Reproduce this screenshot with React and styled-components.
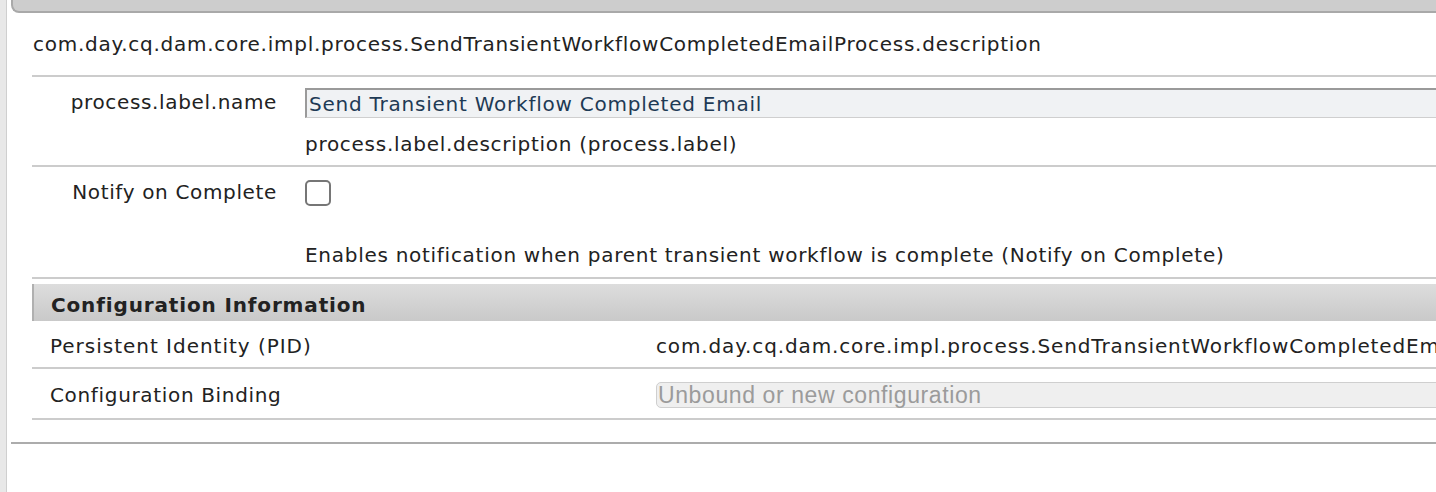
import React from 'react'
import styled, { createGlobalStyle } from 'styled-components'

const GlobalStyle = createGlobalStyle`
  html, body {
    margin: 0;
    padding: 0;
    background: #fff;
  }
  body {
    font-family: "DejaVu Sans", Verdana, sans-serif;
    color: #222;
    overflow: hidden;
  }
`

const Page = styled.div`
  display: flex;
  width: 1436px;
  height: 492px;
  overflow: hidden;
`

const Rail = styled.div`
  flex: 0 0 6px;
  background: #e8e8e8;
  border-right: 1px solid #cfcfcf;
`

const Dialog = styled.div`
  flex: 0 0 1500px;
  margin-left: 4px;
  border-bottom: 2px solid #acacac;
  align-self: flex-start;
  padding-bottom: 22px;
`

const TitleBar = styled.div`
  height: 11px;
  background: #cdcdcd;
  border-left: 2px solid #a9a9a9;
  border-bottom: 2px solid #a9a9a9;
  border-bottom-left-radius: 8px;
`

const Body = styled.div`
  padding-left: 21px;
`

const Description = styled.div`
  font-size: 20px;
  letter-spacing: 0.74px;
  padding: 19px 0 0 1px;
  height: 43px;
  border-bottom: 2px solid #cccccc;
  white-space: nowrap;
`

const PropRow = styled.div`
  display: grid;
  grid-template-columns: 273px 1fr;
  border-bottom: 2px solid #cccccc;
  height: ${p => p.$h}px;
  box-sizing: border-box;
`

const Label = styled.div`
  font-size: 20px;
  letter-spacing: 0.65px;
  text-align: right;
  padding: ${p => p.$top}px 28px 0 0;
`

const Value = styled.div`
  display: flex;
  flex-direction: column;
  align-items: flex-start;
  padding-top: ${p => p.$top}px;
`

const TextInput = styled.div`
  box-sizing: border-box;
  width: 1200px;
  height: 30px;
  background: #f0f2f4;
  border-top: 2px solid #9a9a9a;
  border-left: 2px solid #9a9a9a;
  border-bottom: 1px solid #cfcfcf;
  color: #1e3a55;
  font-size: 20px;
  letter-spacing: 0.76px;
  line-height: 28px;
  padding-left: 2px;
`

const Help = styled.div`
  font-size: 20px;
  letter-spacing: 0.72px;
  margin-top: ${p => p.$gap}px;
  white-space: nowrap;
`

const Checkbox = styled.span`
  display: block;
  width: 26px;
  height: 26px;
  box-sizing: border-box;
  border: 2px solid #767676;
  border-radius: 5px;
  background: #fff;
`

const SectionHead = styled.div`
  margin-top: 5px;
  height: 37px;
  box-sizing: border-box;
  background: linear-gradient(#dddddd, #c9c9c9);
  border-left: 2px solid #b0b0b0;
  font-size: 20px;
  font-weight: bold;
  letter-spacing: 0.85px;
  padding: 9px 0 0 17px;
`

const InfoRow = styled.div`
  display: grid;
  grid-template-columns: 624px 1fr;
  align-items: center;
  height: ${p => p.$h}px;
  box-sizing: border-box;
  padding-top: ${p => p.$top}px;
  border-bottom: 2px solid #cccccc;
  font-size: 20px;
`

const InfoLabel = styled.div`
  padding-left: 18px;
  letter-spacing: ${p => p.$ls}px;
  white-space: nowrap;
`

const InfoValue = styled.div`
  letter-spacing: 0.87px;
  white-space: nowrap;
`

const Select = styled.div`
  box-sizing: border-box;
  width: 900px;
  height: 26px;
  background: #efefef;
  border: 1px solid #cfcfcf;
  border-radius: 5px;
  color: #9b9b9b;
  font-family: "Liberation Sans", Arial, sans-serif;
  font-size: 23px;
  line-height: 24px;
  letter-spacing: 0.6px;
  padding-left: 1px;
  white-space: nowrap;
`

export default function App() {
  return (
    <Page>
      <GlobalStyle />
      <Rail />
      <Dialog>
        <TitleBar />
        <Body>
          <Description>com.day.cq.dam.core.impl.process.SendTransientWorkflowCompletedEmailProcess.description</Description>
          <PropRow $h={90}>
            <Label $top={13}>process.label.name</Label>
            <Value $top={11}>
              <TextInput>Send Transient Workflow Completed Email</TextInput>
              <Help $gap={14}>process.label.description (process.label)</Help>
            </Value>
          </PropRow>
          <PropRow $h={112}>
            <Label $top={13}>Notify on Complete</Label>
            <Value $top={13}>
              <Checkbox />
              <Help $gap={37}>Enables notification when parent transient workflow is complete (Notify on Complete)</Help>
            </Value>
          </PropRow>
          <SectionHead>Configuration Information</SectionHead>
          <InfoRow $h={48} $top={3}>
            <InfoLabel $ls={0.98}>Persistent Identity (PID)</InfoLabel>
            <InfoValue>com.day.cq.dam.core.impl.process.SendTransientWorkflowCompletedEmailProcess</InfoValue>
          </InfoRow>
          <InfoRow $h={51} $top={2}>
            <InfoLabel $ls={0.66}>Configuration Binding</InfoLabel>
            <Select>Unbound or new configuration</Select>
          </InfoRow>
        </Body>
      </Dialog>
    </Page>
  )
}
